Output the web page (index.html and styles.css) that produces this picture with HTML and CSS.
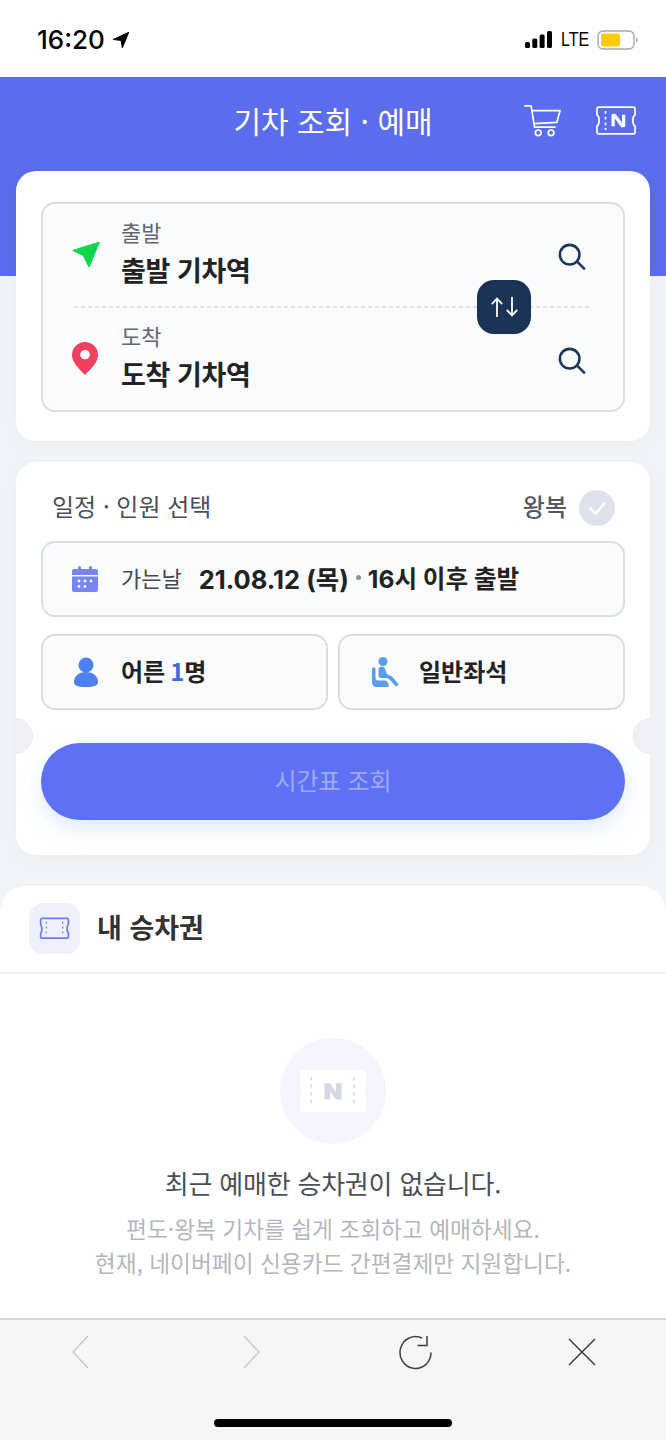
FILE: index.html
```html
<!DOCTYPE html>
<html lang="ko">
<head>
    <meta charset="UTF-8">
    <meta name="viewport" content="width=device-width, initial-scale=1.0">
    <title>기차 조회 · 예매</title>
    <link rel="stylesheet" href="styles.css">
</head>
<body>
    <div class="page">
        <div class="status-bar">
            <div class="status-time">
                <span>16:20</span>
                <svg width="18" height="18" viewBox="0 0 18 18"><path d="M16.500 1.500 1.500 8.500l7.800.8 1 7.200z" fill="#000" stroke="#000" stroke-width="1.200" stroke-linejoin="round"/></svg>
            </div>
            <div class="status-right">
                <svg width="27" height="17" viewBox="0 0 27 17"><g fill="#000"><rect x="0" y="11" width="5" height="6" rx="1.500"/><rect x="7.300" y="7.500" width="5" height="9.500" rx="1.500"/><rect x="14.600" y="3.500" width="5" height="13.500" rx="1.500"/><rect x="22" y="0" width="5" height="17" rx="1.500"/></g></svg>
                <span class="status-lte">LTE</span>
                <svg width="42" height="20" viewBox="0 0 42 20"><rect x="1" y="1" width="36" height="18" rx="5" fill="#fff" stroke="#a9a9a9" stroke-width="1.400"/><rect x="4" y="3.500" width="19" height="13" rx="2.500" fill="#ffcb05"/><path d="M39 7.500c1.200.4 1.800 1.300 1.800 2.500s-.6 2.100-1.800 2.500z" fill="#a9a9a9"/></svg>
            </div>
        </div>

        <header class="top-header">
            <h1>기차 조회 · 예매</h1>
            <div class="header-icons">
                <svg width="38" height="33" viewBox="0 0 40 34" fill="none" stroke="#fff" stroke-width="1.800" stroke-linecap="round" stroke-linejoin="round"><path d="M1 1.500h6.500l3.600 22.500h21.500"/><path d="M8.500 6.500h29.500l-3.500 12.500-24 1.200"/><circle cx="15" cy="30" r="3"/><circle cx="28.500" cy="30" r="3"/></svg>
                <svg width="40" height="29" viewBox="0 0 42 30" fill="none" stroke="#fff" stroke-width="1.800" stroke-linejoin="round"><path d="M3 1h36a2 2 0 0 1 2 2v6c-3 2-3 10 0 12v6a2 2 0 0 1-2 2H3a2 2 0 0 1-2-2v-6c3-2 3-10 0-12V3a2 2 0 0 1 2-2z"/><path d="M10 5v20" stroke-dasharray="3 3"/><path d="M18 21V9.500h1.500l8 11h1.500V9" stroke-width="3.400"/></svg>
            </div>
        </header>

        <main class="cards">
            <section class="card route-card">
                <div class="route-box">
                    <div class="route-row">
                        <span class="route-icon">
                            <svg width="28" height="27" viewBox="0 0 28 27"><path d="M27 1.500 1.500 9.500l9.800 4.500L17 25.500z" fill="#0fd64f" stroke="#0fd64f" stroke-width="1.500" stroke-linejoin="round"/></svg>
                        </span>
                        <div class="route-text">
                            <span class="route-label">출발</span>
                            <strong class="route-name">출발 기차역</strong>
                        </div>
                        <svg class="search-icon" width="28" height="28" viewBox="0 0 30 30" fill="none" stroke="#1d3557" stroke-width="2.700" stroke-linecap="round"><circle cx="12.500" cy="12.500" r="10.500"/><path d="M20.500 20 28 27.500"/></svg>
                    </div>
                    <div class="route-row">
                        <span class="route-icon">
                            <svg width="26" height="33" viewBox="0 0 26 33"><path fill-rule="evenodd" d="M13 33C5 25 0 19.500 0 13a13 13 0 0 1 26 0c0 6.500-5 12-13 20zm0-15.500a4.800 4.800 0 1 0 0-9.600 4.800 4.800 0 0 0 0 9.600z" fill="#f0405f"/></svg>
                        </span>
                        <div class="route-text">
                            <span class="route-label">도착</span>
                            <strong class="route-name">도착 기차역</strong>
                        </div>
                        <svg class="search-icon" width="28" height="28" viewBox="0 0 30 30" fill="none" stroke="#1d3557" stroke-width="2.700" stroke-linecap="round"><circle cx="12.500" cy="12.500" r="10.500"/><path d="M20.500 20 28 27.500"/></svg>
                    </div>
                    <button class="swap-btn">
                        <svg width="27" height="20" viewBox="0 0 27 20" fill="none" stroke="#fff" stroke-width="1.800"><path d="M6 20V2M.8 7.200 6 1.500l5.200 5.700"/><path d="M21 0v18M15.800 12.800 21 18.500l5.200-5.700"/></svg>
                    </button>
                </div>
            </section>

            <section class="card schedule-card">
                <div class="schedule-head">
                    <span class="schedule-title">일정 · 인원 선택</span>
                    <div class="round-trip">
                        <span class="round-label">왕복</span>
                        <span class="check-circle">
                            <svg width="17" height="13" viewBox="0 0 17 13" fill="none" stroke="#fff" stroke-width="2.600" stroke-linecap="round" stroke-linejoin="round"><path d="M1.500 6.500 6.500 11.500 15.500 1.500"/></svg>
                        </span>
                    </div>
                </div>
                <div class="field date-field">
                    <svg width="26" height="26" viewBox="0 0 26 26"><path fill-rule="evenodd" d="M2 3h4V1.500a1.500 1.500 0 0 1 3 0V3h8V1.500a1.500 1.500 0 0 1 3 0V3h4a2 2 0 0 1 2 2v4H0V5a2 2 0 0 1 2-2zM0 10.500h26V24a2 2 0 0 1-2 2H2a2 2 0 0 1-2-2z" fill="#7584f6"/><g fill="#fff"><circle cx="7" cy="15" r="1.400"/><circle cx="13" cy="15" r="1.400"/><circle cx="19" cy="15" r="1.400"/><circle cx="7" cy="20.500" r="1.400"/><circle cx="13" cy="20.500" r="1.400"/></g></svg>
                    <span class="date-label">가는날</span>
                    <strong class="date-value"><span class="date-day">21.08.12 (목)</span><i class="date-dot"></i><span class="date-time">16시 이후 출발</span></strong>
                </div>
                <div class="field-pair">
                    <div class="field person-field">
                        <svg width="24" height="30" viewBox="0 0 24 30"><circle cx="12" cy="8" r="7.500" fill="#4f80f3"/><path d="M0 25c0-6 5-10 12-10s12 4 12 10c0 3-3 5-12 5S0 28 0 25z" fill="#4f80f3"/></svg>
                        <strong class="field-value">어른<em>1</em>명</strong>
                    </div>
                    <div class="field seat-field">
                        <svg width="28" height="31" viewBox="0 0 28 31"><circle cx="11" cy="4.500" r="4.500" fill="#5c9cf0"/><path d="M0 11.500c0-1.500 3.500-1.500 3.500 0V21c0 1.500.8 2.500 2.500 2.500h6c1.500 0 2.500.5 3.500 1.500l1 1.500v3.500H5c-3 0-5-2-5-5z" fill="#5c9cf0"/><path d="M6.500 12c0-3 5.500-3.500 6.500 0l1.500 4c.5 1.300 1 1.500 2.500 2.200l3 1.300 6 7c1 1.500-1 3.500-2.500 2.500l-6-6.500c-1-1-2-1.500-3.500-1.500H9c-1.500 0-2.500-1-2.500-2.500z" fill="#5c9cf0"/></svg>
                        <strong class="field-value">일반좌석</strong>
                    </div>
                </div>
                <button class="search-btn">시간표 조회</button>
                <span class="notch notch-left"></span>
                <span class="notch notch-right"></span>
            </section>
        </main>

        <section class="tickets">
            <div class="tickets-head">
                <span class="tickets-icon">
                    <svg width="31" height="23" viewBox="0 0 32 24" fill="none" stroke="#6d7de6" stroke-width="1.800" stroke-linejoin="round"><path d="M3 1.500h26a1.500 1.500 0 0 1 1.500 1.500v4.500c-1.800 1.500-1.800 7.500 0 9v4a1.500 1.500 0 0 1-1.500 1.500H3A1.500 1.500 0 0 1 1.500 21v-4c1.800-1.500 1.800-7.500 0-9V3A1.500 1.500 0 0 1 3 1.500z"/><path d="M7.500 5v15M24.500 5v15" stroke-dasharray="2 3" stroke-width="1.200"/></svg>
                </span>
                <h2>내 승차권</h2>
            </div>
            <div class="tickets-empty">
                <div class="empty-circle">
                    <svg width="68" height="42" viewBox="0 0 70 44"><path d="M4 0h62a4 4 0 0 1 4 4v12c-3 2-3 10 0 12v12a4 4 0 0 1-4 4H4a4 4 0 0 1-4-4V28c3-2 3-10 0-12V4a4 4 0 0 1 4-4z" fill="#fff"/><path d="M12 7v31M57 7v31" stroke="#d8dbe6" stroke-width="1.600" stroke-dasharray="4 4" fill="none"/><path d="M26 14h6l6 9v-9h6v17h-6l-6-9v9h-6z" fill="#d4d8e6"/></svg>
                </div>
                <p class="empty-title">최근 예매한 승차권이 없습니다.</p>
                <p class="empty-desc">편도·왕복 기차를 쉽게 조회하고 예매하세요.<br>현재, 네이버페이 신용카드 간편결제만 지원합니다.</p>
            </div>
        </section>

        <footer class="toolbar">
            <div class="toolbar-icons">
                <svg width="20" height="34" viewBox="0 0 20 34" fill="none" stroke="#c8c8c8" stroke-width="1.500"><path d="M17 1 2 17l15 16"/></svg>
                <svg width="20" height="34" viewBox="0 0 20 34" fill="none" stroke="#c8c8c8" stroke-width="1.500"><path d="M3 1l15 16L3 33"/></svg>
                <svg width="34" height="36" viewBox="0 0 34 36" fill="none" stroke="#3c3c3c" stroke-width="1.500"><path d="M32 17.500a15.500 16 0 1 1-9-14.500 M28 1v9.500h-9.500"/></svg>
                <svg width="30" height="30" viewBox="0 0 30 30" fill="none" stroke="#3c3c3c" stroke-width="1.500"><path d="M2 2l26 26M28 2 2 28"/></svg>
            </div>
            <div class="home-bar"></div>
        </footer>
    </div>
</body>
</html>
```

FILE: styles.css
```css
* {
    box-sizing: border-box;
}
body {
    font-family: 'Inter', 'Noto Sans CJK KR', sans-serif;
    margin: 0;
    padding: 0;
    background: #f1f4f7;
    color: #222;
}
svg {
    display: block;
    flex-shrink: 0;
}
.page {
    display: flex;
    flex-direction: column;
    width: 666px;
    height: 1440px;
    overflow: hidden;
}

/* status bar */
.status-bar {
    display: flex;
    justify-content: space-between;
    align-items: center;
    height: 77px;
    padding: 2px 27px 0 37px;
    background: #fff;
}
.status-time {
    display: flex;
    align-items: center;
    gap: 7px;
    font-size: 26px;
    font-weight: 500;
    color: #000;
}
.status-right {
    display: flex;
    align-items: center;
    gap: 8px;
}
.status-lte {
    width: 28px;
    margin-left: 1px;
    font-family: 'Liberation Sans', sans-serif;
    font-size: 20px;
    color: #000;
    transform: scaleX(0.8);
    transform-origin: left center;
}

/* blue header */
.top-header {
    position: relative;
    display: flex;
    justify-content: center;
    height: 199px;
    padding-top: 21px;
    background: #5b6cec;
}
.top-header h1 {
    margin: 0;
    font-family: 'Noto Sans CJK KR', sans-serif;
    font-size: 30px;
    font-weight: 400;
    line-height: 44px;
    color: #fff;
}
.header-icons {
    position: absolute;
    top: 27px;
    right: 30px;
    display: flex;
    align-items: center;
    gap: 34px;
}

/* cards */
.cards {
    display: flex;
    flex-direction: column;
    gap: 21px;
    margin-top: -105px;
    padding: 0 16px;
}
.card {
    position: relative;
    background: #fff;
    border-radius: 20px;
    padding: 31px 25px;
    box-shadow: 0 4px 14px rgba(60, 70, 110, 0.04);
}
.route-card {
    height: 270px;
}
.route-box {
    position: relative;
    display: flex;
    flex-direction: column;
    height: 210px;
    background: #fafbfd;
    border: 2px solid #dadde8;
    border-radius: 14px;
}
.route-row {
    display: flex;
    align-items: center;
    height: 103px;
    padding: 0 37px 0 29px;
}
.route-row:first-child {
    position: relative;
}
.route-row:first-child::after {
    content: "";
    position: absolute;
    left: 31px;
    right: 31px;
    bottom: -1px;
    height: 2px;
    background: repeating-linear-gradient(90deg, #dfe1e6 0 4px, transparent 4px 7px);
}
.route-row + .route-row {
    padding-top: 2px;
}
.route-icon {
    width: 28px;
    margin-top: -2px;
}
.route-text {
    display: flex;
    flex-direction: column;
    flex: 1;
    margin-top: -5px;
    margin-left: 21px;
    font-family: 'Noto Sans CJK KR', sans-serif;
}
.route-label {
    margin-bottom: 3px;
    font-size: 22px;
    line-height: 30px;
    color: #63666e;
}
.route-name {
    font-size: 27px;
    font-weight: 700;
    line-height: 42px;
    letter-spacing: -0.4px;
    color: #222;
}
.search-icon {
    margin-top: 2px;
}
.swap-btn {
    position: absolute;
    left: 434px;
    top: 76px;
    display: flex;
    align-items: center;
    justify-content: center;
    width: 54px;
    height: 54px;
    padding: 0;
    border: none;
    border-radius: 17px;
    background: #1c3358;
}

.schedule-card {
    height: 393px;
    padding: 28px 25px 0;
    overflow: hidden;
}
.schedule-head {
    display: flex;
    justify-content: space-between;
    align-items: center;
    height: 36px;
    padding: 0 10px 0 11px;
    margin-bottom: 15px;
    font-family: 'Noto Sans CJK KR', sans-serif;
}
.schedule-title {
    margin-top: -6px;
    font-size: 24px;
    color: #4b4e55;
}
.round-trip {
    display: flex;
    align-items: center;
    gap: 12px;
    font-size: 24px;
    font-weight: 500;
    color: #55585f;
}
.round-label {
    margin-top: -6px;
}
.check-circle {
    display: flex;
    align-items: center;
    justify-content: center;
    width: 36px;
    height: 36px;
    border-radius: 50%;
    background: #dfe2ec;
}
.field {
    display: flex;
    align-items: center;
    height: 76px;
    background: #fafbfd;
    border: 2px solid #dadde8;
    border-radius: 14px;
}
.date-field {
    gap: 23px;
    margin-bottom: 17px;
    padding: 0 29px;
}
.person-field {
    gap: 23px;
    padding: 0 31px;
}
.seat-field {
    gap: 19px;
    padding: 0 32px;
}
.date-label {
    margin-top: -4px;
    font-family: 'Noto Sans CJK KR', sans-serif;
    font-size: 22px;
    color: #44474e;
}
.date-value {
    display: flex;
    align-items: center;
    margin-top: -4px;
    margin-left: -6px;
    font-family: 'Inter', 'Noto Sans CJK KR', sans-serif;
    font-weight: 700;
    color: #222;
    white-space: nowrap;
}
.date-day {
    font-size: 25.5px;
}
.date-time {
    font-size: 24.6px;
}
.date-dot {
    width: 5px;
    height: 5px;
    margin: 0 7px;
    border-radius: 50%;
    background: #8d9099;
}
.field-pair {
    display: grid;
    grid-template-columns: 1fr 1fr;
    gap: 10px;
}
.field-value {
    margin-top: -4px;
    font-family: 'Noto Sans CJK KR', sans-serif;
    font-size: 24px;
    font-weight: 700;
    color: #222;
}
.field-value em {
    margin-left: 5px;
    font-style: normal;
    color: #3f69dc;
}
.search-btn {
    display: block;
    width: 100%;
    height: 77px;
    margin-top: 33px;
    padding: 0 0 4px;
    border: none;
    border-radius: 39px;
    background: #5e70f4;
    font-family: 'Noto Sans CJK KR', sans-serif;
    font-size: 24px;
    color: rgba(255, 255, 255, 0.42);
    box-shadow: 0 8px 22px rgba(90, 150, 255, 0.2);
}
.notch {
    position: absolute;
    top: 256px;
    width: 36px;
    height: 36px;
    border-radius: 50%;
    background: #eff1f5;
    border: 1px solid #e6e8ee;
}
.notch-left {
    left: -19px;
}
.notch-right {
    right: -19px;
}

/* my tickets */
.tickets {
    flex: 1;
    margin-top: 31px;
    background: #fff;
    border-radius: 26px 26px 0 0;
}
.tickets-head {
    display: flex;
    align-items: center;
    gap: 17px;
    height: 88px;
    padding: 0 29px 2px;
    border-bottom: 2px solid #f1f2f5;
}
.tickets-icon {
    display: flex;
    align-items: center;
    justify-content: center;
    width: 51px;
    height: 51px;
    border-radius: 14px;
    background: #eef0fd;
}
.tickets-head h2 {
    margin: -4px 0 0;
    font-family: 'Noto Sans CJK KR', sans-serif;
    font-size: 27px;
    font-weight: 700;
    color: #333;
}
.tickets-empty {
    display: flex;
    flex-direction: column;
    align-items: center;
    padding-top: 64px;
    font-family: 'Noto Sans CJK KR', sans-serif;
}
.empty-circle {
    display: flex;
    align-items: center;
    justify-content: center;
    width: 106px;
    height: 106px;
    border-radius: 50%;
    background: #f4f5fc;
}
.empty-title {
    margin: 19px 0 0;
    font-size: 26px;
    line-height: 40px;
    letter-spacing: -0.2px;
    color: #4c4f56;
}
.empty-desc {
    margin: 9px 0 0;
    font-size: 22.7px;
    line-height: 34px;
    text-align: center;
    color: #b4b6bd;
}

/* browser toolbar */
.toolbar {
    height: 122px;
    background: #f6f6f6;
    border-top: 2px solid #d6d6d6;
}
.toolbar-icons {
    position: relative;
    height: 66px;
}
.toolbar-icons svg {
    position: absolute;
    top: 15px;
}
.toolbar-icons svg:nth-child(1) { left: 71px; }
.toolbar-icons svg:nth-child(2) { left: 241px; }
.toolbar-icons svg:nth-child(3) { left: 399px; }
.toolbar-icons svg:nth-child(4) { left: 567px; top: 17px; }
.home-bar {
    width: 238px;
    height: 8px;
    margin: 33px auto 0;
    border-radius: 4px;
    background: #000;
}
```
